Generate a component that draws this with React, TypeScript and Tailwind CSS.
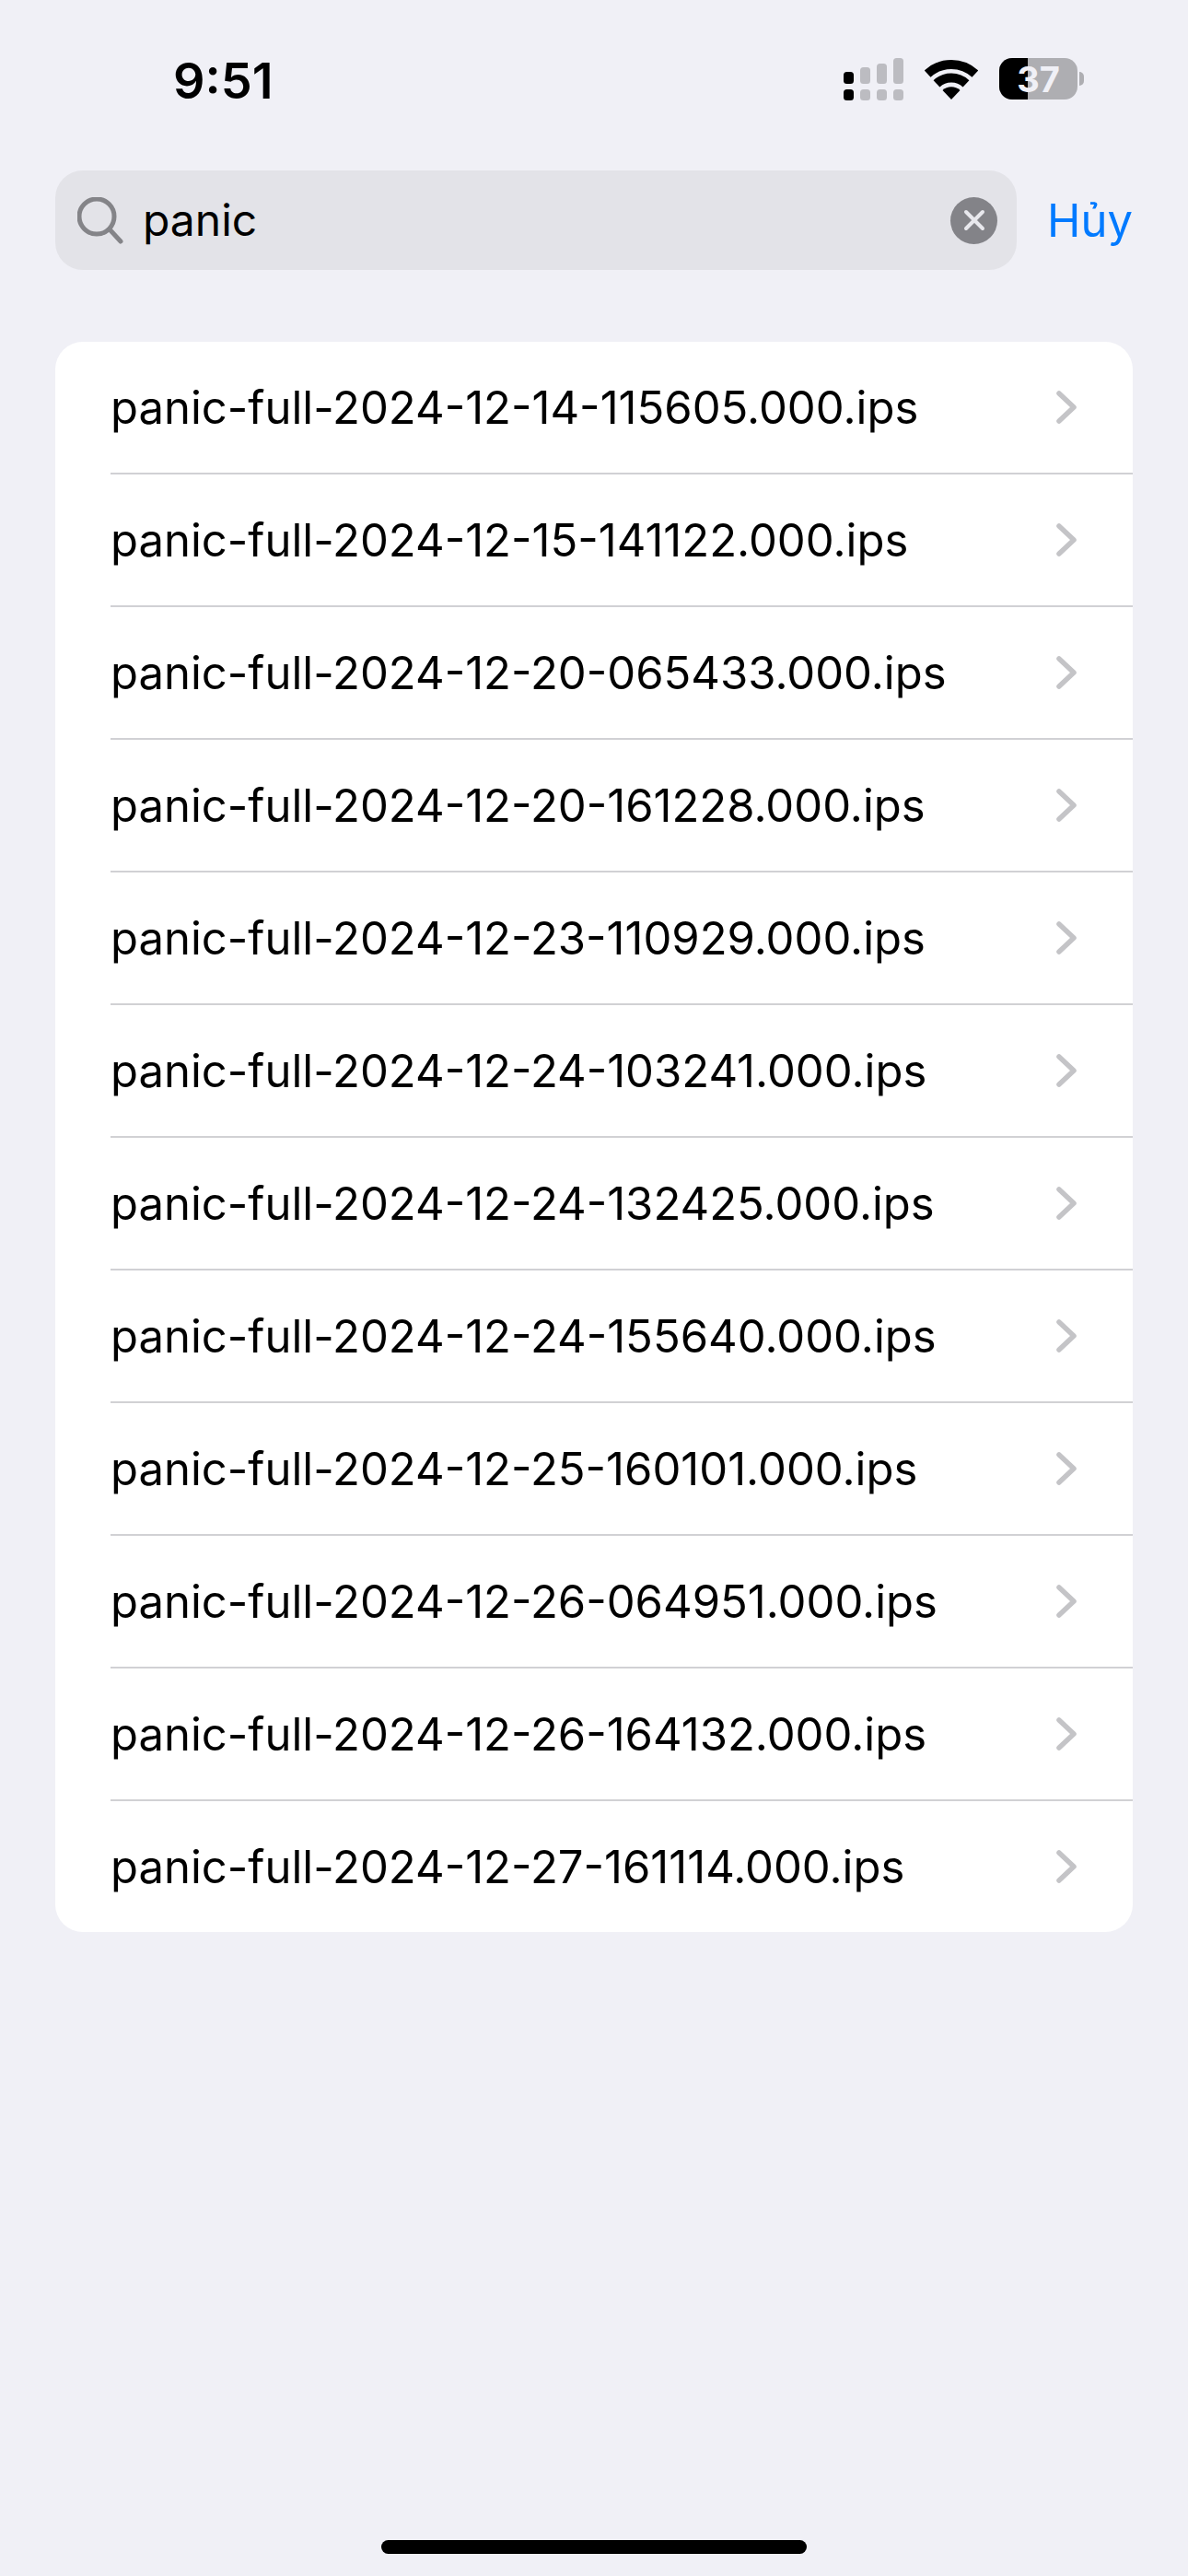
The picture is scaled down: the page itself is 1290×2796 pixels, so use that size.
const files = [
  'panic-full-2024-12-14-115605.000.ips',
  'panic-full-2024-12-15-141122.000.ips',
  'panic-full-2024-12-20-065433.000.ips',
  'panic-full-2024-12-20-161228.000.ips',
  'panic-full-2024-12-23-110929.000.ips',
  'panic-full-2024-12-24-103241.000.ips',
  'panic-full-2024-12-24-132425.000.ips',
  'panic-full-2024-12-24-155640.000.ips',
  'panic-full-2024-12-25-160101.000.ips',
  'panic-full-2024-12-26-064951.000.ips',
  'panic-full-2024-12-26-164132.000.ips',
  'panic-full-2024-12-27-161114.000.ips',
];

function Signal() {
  return (
    <svg width="65" height="47" viewBox="0 0 65 47">
      {/* top row */}
      <rect x="0" y="16" width="11" height="13" rx="3.5" fill="#000" />
      <rect x="18" y="11" width="11" height="18" rx="3.5" fill="#bcbcc1" />
      <rect x="36" y="7" width="11" height="22" rx="3.5" fill="#bcbcc1" />
      <rect x="54" y="1" width="11" height="28" rx="3.5" fill="#bcbcc1" />
      {/* bottom row */}
      <rect x="0" y="35" width="11" height="12" rx="3.5" fill="#000" />
      <rect x="18" y="35" width="11" height="12" rx="3.5" fill="#bcbcc1" />
      <rect x="36" y="35" width="11" height="12" rx="3.5" fill="#bcbcc1" />
      <rect x="54" y="35" width="11" height="12" rx="3.5" fill="#bcbcc1" />
    </svg>
  );
}

function Wifi() {
  return (
    <svg width="58" height="44" viewBox="0 0 58 44" fill="none">
      <path d="M3.1 16.2A38 38 0 0 1 54.9 16.2" stroke="#000" strokeWidth="10" />
      <path d="M13 26.8A23.5 23.5 0 0 1 45 26.8" stroke="#000" strokeWidth="10" />
      <path d="M29 44L19.5 34A14 14 0 0 1 38.5 34Z" fill="#000" />
    </svg>
  );
}

function Battery() {
  return (
    <div className="flex items-center gap-[2px]">
      <div className="relative flex h-[45px] w-[85px] rounded-[14px] bg-[#aeaeb2]">
        <div className="h-full w-[31px] rounded-l-[14px] bg-black" />
        <span className="absolute inset-0 flex items-center justify-center text-[38px] font-bold leading-none text-[#f0f0f6]">
          37
        </span>
      </div>
      <div className="h-[15px] w-[5px] rounded-r-full bg-[#aeaeb2]" />
    </div>
  );
}

function SearchBar() {
  return (
    <div className="flex items-center pl-[60px] pr-[60px]">
      <div className="flex h-[108px] w-[1044px] items-center rounded-[30px] bg-[#e3e3e8] pl-[24px] pr-[21px]">
        <svg width="50" height="51" viewBox="0 0 50 51" fill="none" stroke="#848488" strokeWidth="5" strokeLinecap="round">
          <circle cx="21" cy="21" r="19" />
          <path d="M35 35L47 48" />
        </svg>
        <span className="ml-[21px] flex-1 text-[48px] leading-none text-black">panic</span>
        <div className="flex h-[51px] w-[51px] items-center justify-center rounded-full bg-[#838388]">
          <svg width="24" height="24" viewBox="0 0 24 24" fill="none" stroke="#e8e8ed" strokeWidth="4" strokeLinecap="round">
            <path d="M3 3L21 21M21 3L3 21" />
          </svg>
        </div>
      </div>
      <span className="ml-auto text-[49px] leading-none text-[#007aff]">Hủy</span>
    </div>
  );
}

function Row({ name, last }: { name: string; last: boolean }) {
  return (
    <div className="pl-[60px]">
      <div className={`flex items-center pr-[60px] ${last ? 'h-[142px]' : 'h-[144px] border-b-2 border-[#d1d1d4]'}`}>
        <span className="flex-1 text-[49px] leading-none text-black">{name}</span>
        <svg width="24" height="38" viewBox="0 0 24 38" fill="none" stroke="#c4c4c7" strokeWidth="5.5" strokeLinecap="round" strokeLinejoin="round">
          <path d="M4 4L20 19L4 34" />
        </svg>
      </div>
    </div>
  );
}

export default function App() {
  return (
    <div className="flex h-[2796px] w-[1290px] flex-col overflow-hidden bg-[#f0f0f6] font-['Inter',sans-serif]">
      {/* Status bar */}
      <div className="flex h-[185px] items-start pl-[188px] pr-[113px] pt-[59px]">
        <span className="text-[54px] font-semibold leading-[58px] text-black">9:51</span>
        <div className="ml-auto mt-[3px] flex items-center gap-[23px]">
          <Signal />
          <Wifi />
          <Battery />
        </div>
      </div>

      <SearchBar />

      {/* Results */}
      <div className="mx-[60px] mt-[78px] overflow-hidden rounded-[30px] bg-white">
        {files.map((name, i) => (
          <Row key={name} name={name} last={i === files.length - 1} />
        ))}
      </div>

      {/* Home indicator */}
      <div className="mb-[24px] mt-auto h-[15px] w-[462px] self-center rounded-full bg-black" />
    </div>
  );
}
